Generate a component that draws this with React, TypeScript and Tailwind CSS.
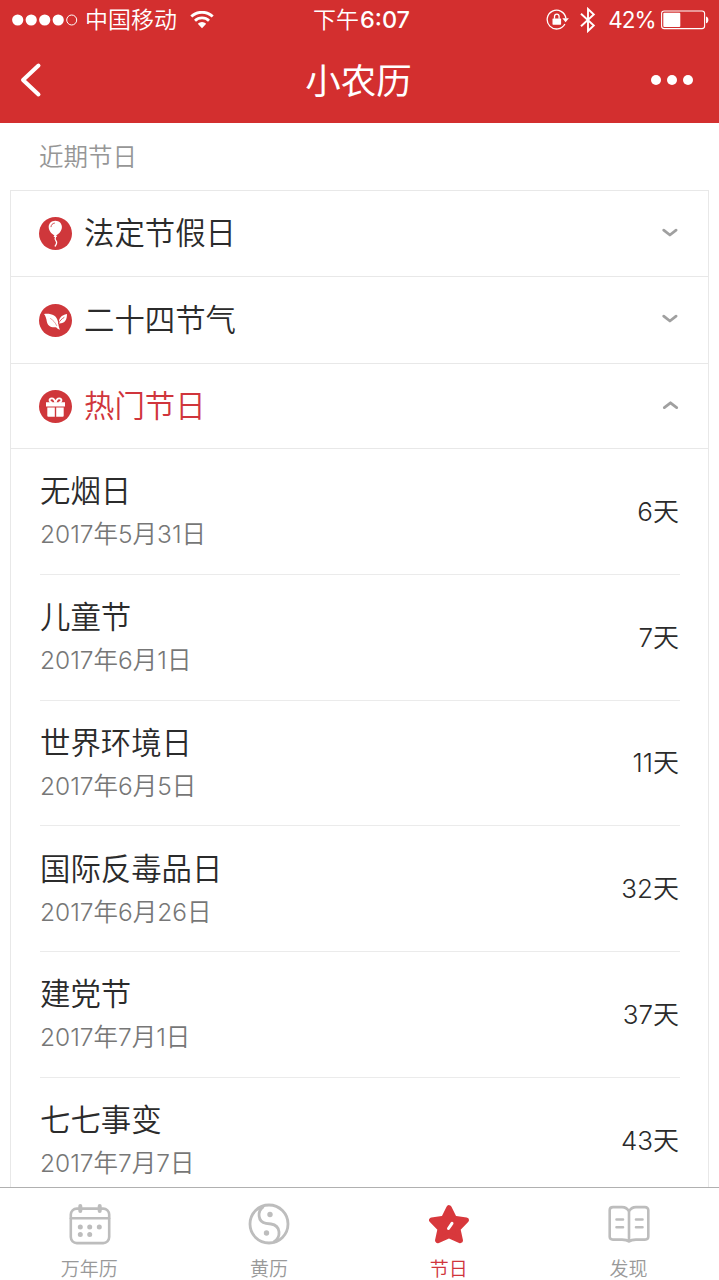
import React, { useState } from 'react';

type Festival = { name: string; date: string; days: number };

const festivals: Festival[] = [
    { name: '无烟日', date: '2017年5月31日', days: 6 },
    { name: '儿童节', date: '2017年6月1日', days: 7 },
    { name: '世界环境日', date: '2017年6月5日', days: 11 },
    { name: '国际反毒品日', date: '2017年6月26日', days: 32 },
    { name: '建党节', date: '2017年7月1日', days: 37 },
    { name: '七七事变', date: '2017年7月7日', days: 43 },
];

const BalloonIcon = () => (
    <svg className="h-[33px] w-[33px]" viewBox="0 0 33 33" fill="none">
        <circle cx="16.5" cy="16.5" r="16.5" fill="#cf373b" />
        <path d="M16.300 3.700c-4 0-6.600 2.800-6.600 6.400 0 3.900 3.200 7.200 5.700 8.300l-.9 1.700h3.600l-.9-1.700c2.500-1.100 5.700-4.400 5.700-8.300 0-3.600-2.600-6.400-6.600-6.400z" fill="#fff" />
        <path d="M12 9.700c.2-2 1.500-3.300 3.400-3.600" stroke="#cf373b" strokeWidth=".9" strokeLinecap="round" />
        <path d="M16.500 20c-.8 1.800-.8 2.600.4 3.800 1.300 1.400 1 2.900-.7 5.200" stroke="#fff" strokeWidth="1.300" strokeLinecap="round" />
    </svg>
);

const LeafIcon = () => (
    <svg className="h-[33px] w-[33px]" viewBox="0 0 33 33" fill="none">
        <circle cx="16.5" cy="16.5" r="16.5" fill="#cf373b" />
        <path d="M5 10c7-.7 12.600 1 14 7.800.5 2.500.5 4.700 1.900 7.900-1.800-.6-2.800-1.500-3.800-2.500-5.200.8-8.500-1.600-9.300-5.700C7.400 14.500 6.600 12 5 10z" fill="#fff" />
        <path d="M11.500 14.500c2.700 1.700 4.700 4 6.100 7" stroke="#cf373b" strokeWidth=".5" strokeLinecap="round" />
        <path d="M28 10c-.1 6-1.800 9.200-7.900 9.400C19.300 14 22.400 11.300 28 10z" fill="#fff" />
        <path d="M25 13.500c-2.500 1.500-4.300 3.300-5.500 6" stroke="#cf373b" strokeWidth=".8" strokeLinecap="round" />
    </svg>
);

const GiftIcon = () => (
    <svg className="h-[33px] w-[33px]" viewBox="0 0 33 33" fill="none">
        <circle cx="16.5" cy="16.5" r="16.5" fill="#cf373b" />
        <path d="M7 12.200h19v4.300H7z M8.300 17.600h7.500v9.200H9.300a1 1 0 0 1-1-1z M17.200 17.600h7.500v8.200a1 1 0 0 1-1 1h-6.500z" fill="#fff" />
        <path d="M16.300 12.700c-.5-2.700-1.700-4.300-3.500-4.300-1.600 0-2.600 1.200-2.100 2.500.4 1.100 1.600 1.600 2.600 1.700M16.700 12.700c.5-2.700 1.700-4.300 3.500-4.300 1.600 0 2.600 1.200 2.100 2.500-.4 1.100-1.600 1.600-2.600 1.700" stroke="#fff" strokeWidth="1.900" />
    </svg>
);

const Chevron: React.FC<{ open: boolean }> = ({ open }) => (
    <svg className="mb-[2px] h-[10px] w-[20px]" viewBox="0 0 20 10" fill="none" stroke="#a0a0a0" strokeWidth="2.800" strokeLinecap="round" strokeLinejoin="round">
        <path d={open ? 'M4.300 7.600l6.200-4.800 6.200 4.800' : 'M3.700 2.200l6.200 4.800L16.100 2.200'} />
    </svg>
);

const StatusBar = () => (
    <div className="grid h-10 grid-cols-[1fr_auto_1fr] items-center pl-3 pr-[10px] font-[350]">
        <div className="flex items-center">
            <svg className="h-3 w-[66px]" viewBox="0 0 66 12" fill="#fff">
                <circle cx="5.700" cy="6" r="5.600" />
                <circle cx="19.200" cy="6" r="5.600" />
                <circle cx="32.700" cy="6" r="5.600" />
                <circle cx="46.200" cy="6" r="5.600" />
                <circle cx="59.700" cy="6" r="5" fill="none" stroke="#fff" strokeWidth="1" />
            </svg>
            <span className="ml-[7px] text-[23px] leading-none">中国移动</span>
            <svg className="ml-[13px] h-[18px] w-6" viewBox="0 0 24 18" fill="none" stroke="#fff" strokeWidth="2.800">
                <path d="M1.300 5.600a15.300 15.300 0 0 1 21.400 0M5 9.700a10 10 0 0 1 14 0" />
                <path d="M7.800 12.800a6 6 0 0 1 8.400 0L12 17.200z" fill="#fff" stroke="none" />
            </svg>
        </div>
        <span className="ml-[2px] text-[23px] leading-none">下午<span className="ml-px text-[23.500px] font-[450]">6:07</span></span>
        <div className="flex items-center justify-end">
            <svg className="h-[22px] w-[24px]" viewBox="0 0 24 22" fill="none" stroke="#fff" strokeWidth="1.300">
                <path d="M18.900 15A9.400 9.400 0 1 1 19.900 9.300" />
                <path d="M16.300 9.300h6.600l-3.300 4z" fill="#fff" stroke="none" />
                <rect x="6.500" y="9.400" width="8.600" height="6.300" rx=".6" fill="#fff" stroke="none" />
                <path d="M8.500 9.700V7.500a2.300 2.300 0 0 1 4.600 0V9.700" />
            </svg>
            <svg className="ml-[10px] h-[26px] w-4" viewBox="0 0 16 26" fill="none" stroke="#fff" strokeWidth="1.900">
                <path d="M1 6.800l12.800 11.700L8 24V2l5.800 5.500L1 19.200" />
            </svg>
            <span className="ml-3 text-[22.500px] font-normal leading-none tracking-[-1px]">42%</span>
            <svg className="ml-[5.500px] h-5 w-[48px]" viewBox="0 0 48 20" fill="none">
                <rect x=".6" y="1" width="43" height="17.600" rx="2.600" stroke="#fff" strokeWidth="1.100" />
                <rect x="2.300" y="2.700" width="17" height="14.200" rx="1" fill="#fff" />
                <path d="M45 6.500c3.200.8 3.200 6 0 6.800z" fill="#fff" />
            </svg>
        </div>
    </div>
);

const NavBar = () => (
    <div className="grid h-20 grid-cols-3 items-center pl-5 pr-[26px]">
        <svg className="h-9 w-[22px]" viewBox="0 0 22 36" fill="none" stroke="#fff" strokeWidth="4" strokeLinecap="round" strokeLinejoin="round">
            <path d="M18.500 3.500L3 18l15.500 14.500" />
        </svg>
        <h1 className="ml-[4px] mt-1 text-center text-[35.500px] font-normal leading-none">小农历</h1>
        <div className="flex justify-end gap-1.5">
            <span className="h-[10px] w-[10px] rounded-full bg-white" />
            <span className="h-[10px] w-[10px] rounded-full bg-white" />
            <span className="h-[10px] w-[10px] rounded-full bg-white" />
        </div>
    </div>
);

const CalendarIcon = () => (
    <svg className="h-[42px] w-[42px]" viewBox="0 0 42 42" fill="none" stroke="#bdbdbd" strokeWidth="2.600" strokeLinecap="round">
        <rect x="1.800" y="5.600" width="38.400" height="34.500" rx="6" />
        <path d="M2 15.300h38" />
        <path d="M11.300 3v5M30.700 3v5" strokeWidth="4" />
        <path d="M11.300 24h.01M20.700 24h.01M30.300 24h.01M11.300 31.600h.01M20.700 31.600h.01" strokeWidth="5" />
    </svg>
);

const TaijiIcon = () => (
    <svg className="mr-px h-[42px] w-[42px]" viewBox="0 0 42 42" fill="none" stroke="#bdbdbd" strokeWidth="2.800">
        <circle cx="21" cy="21" r="19" />
        <path d="M15.500 3.500c-6.500 4.500-6 15.500 2.500 16.800l5 .7c10 1.500 10.500 13.500 2.500 18.300" />
        <circle cx="22" cy="11.500" r="2.700" fill="#bdbdbd" stroke="none" />
        <circle cx="18.500" cy="30" r="2.700" fill="#bdbdbd" stroke="none" />
    </svg>
);

const StarIcon = () => (
    <svg className="h-[42px] w-[42px]" viewBox="0 0 42 42" fill="#d8383c" stroke="#d8383c" strokeWidth="5.500" strokeLinejoin="round">
        <path d="M21 4.900l5.200 10.500 12 1.700-8.500 8.600 2.500 11.700L21 32.400 9.800 37.400l2.500-11.700-8.500-8.600 12-1.700z" />
        <path d="M24 20.300l-3.500 5.200" stroke="#fff" strokeWidth="3" strokeLinecap="round" />
    </svg>
);

const BookIcon = () => (
    <svg className="mr-px h-[42px] w-[42px]" viewBox="0 0 42 42" fill="none" stroke="#bdbdbd" strokeWidth="2.600" strokeLinecap="round" strokeLinejoin="round">
        <path d="M21 8.500C19.500 5.300 17.500 4.100 14 4.100H5c-2 0-3.300 1.200-3.300 3v26.700c0 1.800 1.300 2.800 3.300 2.800H14c3 0 5 .2 7 2 2-1.800 4-2 7-2h9c2 0 3.300-1 3.300-2.800V7.100c0-1.800-1.300-3-3.300-3H28c-3.500 0-5.500 1.200-7 4.400zM21 8.500v30" />
        <path d="M8.500 16.500h6.500M8.500 24.300h6.500M28 16.500h6.500M28 24.300h6.500" />
    </svg>
);

const categories = [
    { name: '法定节假日', icon: <BalloonIcon />, height: 'h-[86px]' },
    { name: '二十四节气', icon: <LeafIcon />, height: 'h-[87px]' },
    { name: '热门节日', icon: <GiftIcon />, height: 'h-[85px]' },
];

const tabs = [
    { name: '万年历', icon: <CalendarIcon /> },
    { name: '黄历', icon: <TaijiIcon /> },
    { name: '节日', icon: <StarIcon /> },
    { name: '发现', icon: <BookIcon /> },
];

const App: React.FC = () => {
    const [opened, setOpened] = useState('热门节日');

    return (
        <div className="flex h-[1280px] w-[719px] flex-col overflow-hidden bg-white font-['Inter','Noto_Sans_CJK_SC',sans-serif]">
            <header className="h-[123px] shrink-0 bg-[#d32f2f] text-white">
                <StatusBar />
                <NavBar />
            </header>

            <main className="min-h-0 flex-1 overflow-hidden px-[10px]">
                <h2 className="flex h-[67px] items-center pl-[29px] pt-px text-[24.500px] font-[350] text-[#969696]">近期节日</h2>
                <div className="border border-[#e8e8e8]">
                    {categories.map(({ name, icon, height }) => (
                        <div key={name}>
                            <button
                                type="button"
                                onClick={() => setOpened(opened === name ? '' : name)}
                                className={`${height} flex w-full items-center border-b border-[#e8e8e8] pl-7 pr-7 font-[350]`}
                            >
                                {icon}
                                <span className={opened === name ? 'ml-3 text-[30.400px] leading-none text-[#d0353c]' : 'ml-3 text-[30.400px] leading-none text-[#2b2b2b]'}>{name}</span>
                                <span className="ml-auto"><Chevron open={opened === name} /></span>
                            </button>
                            {opened === name && name === '热门节日' && (
                                <ul className="pl-[29px] pr-7">
                                    {festivals.map((item) => (
                                        <li key={item.name} className="flex h-[125.750px] items-center justify-between border-b border-[#ebebeb] font-[350]">
                                            <div className="pt-[2px]">
                                                <p className="text-[30.400px] leading-[44px] text-[#2b2b2b]">{item.name}</p>
                                                <p className="text-[24.500px] leading-[42px] text-[#777]">{item.date}</p>
                                            </div>
                                            <span className="pr-px text-[26px] text-[#2b2b2b]">{item.days}天</span>
                                        </li>
                                    ))}
                                </ul>
                            )}
                        </div>
                    ))}
                </div>
            </main>

            <nav className="grid h-[93px] shrink-0 grid-cols-4 border-t border-[#b0b0b0] bg-white">
                {tabs.map(({ name, icon }) => (
                    <a key={name} href="#" className="flex flex-col items-center pt-[15px]">
                        {icon}
                        <span className={name === '节日' ? 'mr-px mt-[13px] text-[19px] font-[350] leading-6 text-[#d0353c]' : 'mr-px mt-[13px] text-[19px] font-[350] leading-6 text-[#999]'}>{name}</span>
                    </a>
                ))}
            </nav>
        </div>
    );
};

export default App;
